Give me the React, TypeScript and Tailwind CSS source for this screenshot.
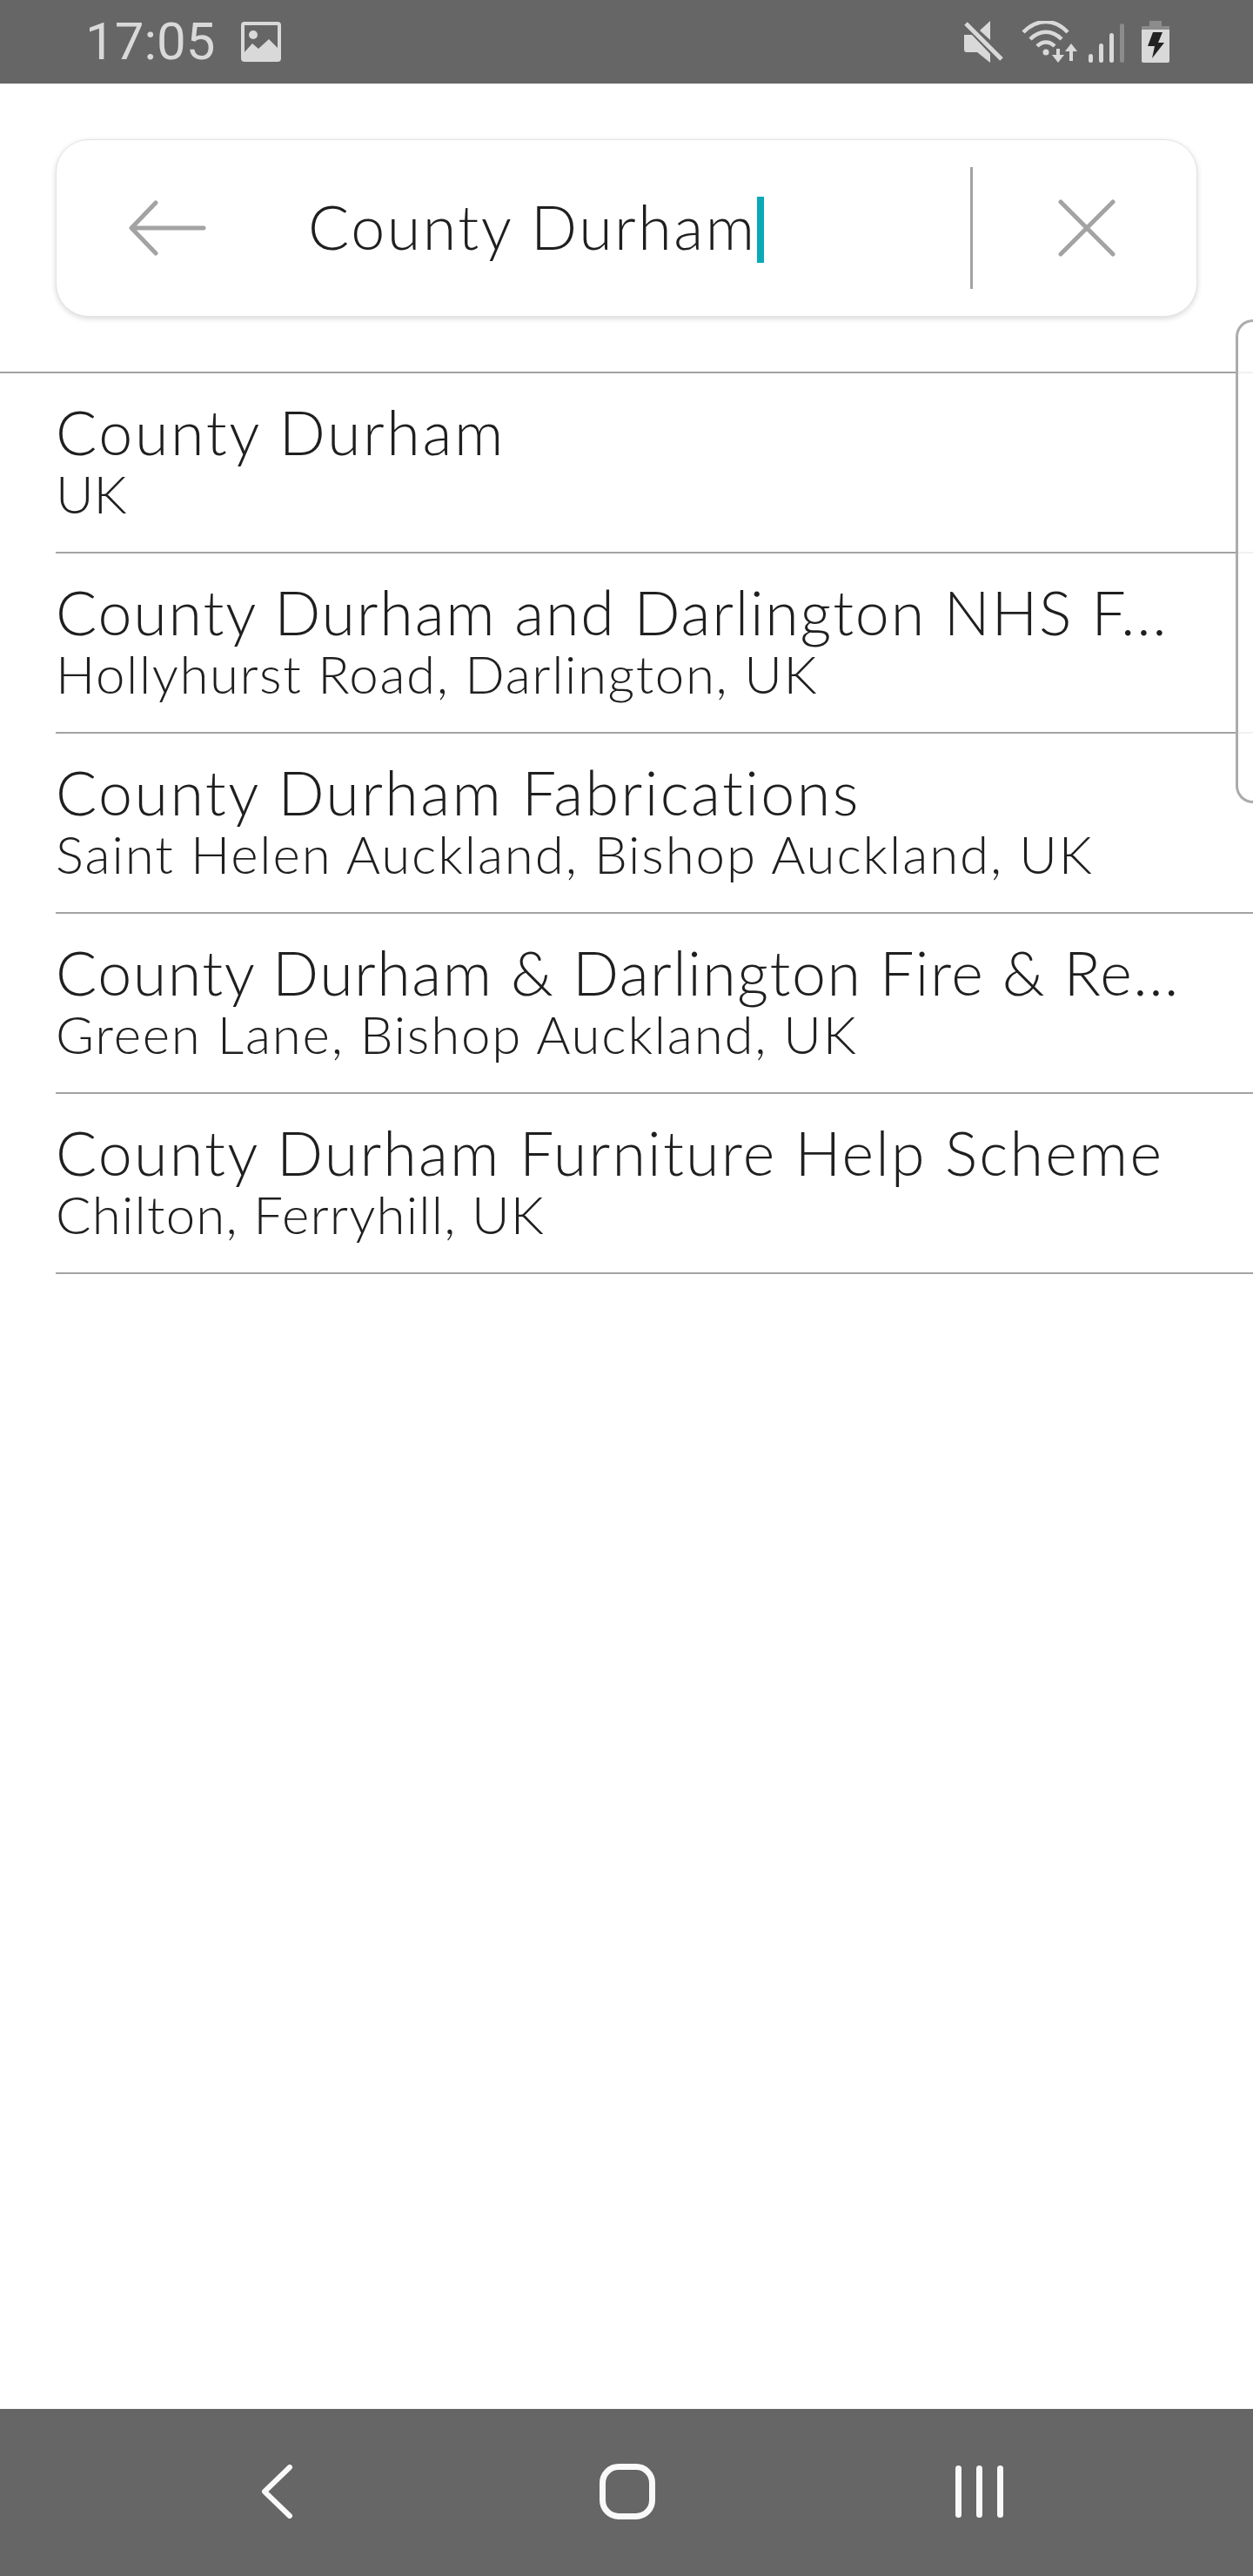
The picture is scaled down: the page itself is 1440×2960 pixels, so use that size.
import React from 'react';

const results = [
  { title: 'County Durham', sub: 'UK', titleCls: 'tracking-[2.6px]', subCls: 'tracking-[0px]' },
  { title: 'County Durham and Darlington NHS F...', sub: 'Hollyhurst Road, Darlington, UK', titleCls: 'tracking-[1.8px]', subCls: 'tracking-[1.6px]' },
  { title: 'County Durham Fabrications', sub: 'Saint Helen Auckland, Bishop Auckland, UK', titleCls: 'tracking-[2.4px]', subCls: 'tracking-[1.9px]' },
  { title: 'County Durham & Darlington Fire & Re...', sub: 'Green Lane, Bishop Auckland, UK', titleCls: 'tracking-[1.5px]', subCls: 'tracking-[1.8px]' },
  { title: 'County Durham Furniture Help Scheme', sub: 'Chilton, Ferryhill, UK', titleCls: 'tracking-[2.2px]', subCls: 'tracking-[1.2px]' },
];

const StatusBar: React.FC = () => (
  <div className="h-24 shrink-0 bg-[#666666] flex items-center justify-between pl-[98px] pr-[96px] text-[#d9d9d9]">
    <div className="flex items-center gap-[30px]">
      <span className="font-[Roboto,sans-serif] text-[60px] leading-none">17:05</span>
      {/* gallery notification */}
      <svg width="46" height="46" viewBox="0 0 46 46" fill="none">
        <rect x="2" y="2" width="42" height="42" rx="2" stroke="#d9d9d9" strokeWidth="4" />
        <circle cx="14" cy="15" r="5" fill="#d9d9d9" />
        <path d="M3 36 L13 25 L20 31 L32 20 L43 31 V44 H3 Z" fill="#d9d9d9" />
      </svg>
    </div>
    <div className="flex items-center h-12">
      {/* mute */}
      <svg width="46" height="48" viewBox="0 0 46 48" fill="none">
        <path d="M0 16 H9 L30 38 V48 L15 36 H3 Q0 36 0 33 Z" fill="#d9d9d9" />
        <path d="M30 0 V22 L18 11 Z" fill="#d9d9d9" />
        <path d="M2 3 L43 44" stroke="#d9d9d9" strokeWidth="5" />
      </svg>
      {/* wifi with data arrows */}
      <svg className="ml-5" width="66" height="48" viewBox="0 0 66 48" fill="none">
        <path d="M2 13 C18 -3 38 -3 53 13" stroke="#d9d9d9" strokeWidth="4.5" />
        <path d="M10 21 C21 10 35 10 46 21" stroke="#d9d9d9" strokeWidth="4.5" />
        <path d="M18 29 C24 23 32 23 38 29" stroke="#d9d9d9" strokeWidth="4.5" />
        <circle cx="28" cy="36" r="3.5" fill="#d9d9d9" />
        <path d="M42 32 V44" stroke="#d9d9d9" strokeWidth="4" />
        <path d="M35 39 H49 L42 48 Z" fill="#d9d9d9" />
        <path d="M57 34 V46" stroke="#d9d9d9" strokeWidth="4" />
        <path d="M50 35 L57 26 L64 35 Z" fill="#d9d9d9" />
      </svg>
      {/* signal */}
      <div className="ml-[11px] flex items-end gap-[7px] h-[45px] self-end">
        <div className="w-[5px] h-[10px] rounded-full bg-[#d9d9d9]" />
        <div className="w-[5px] h-[22px] rounded-full bg-[#d9d9d9]" />
        <div className="w-[5px] h-[34px] rounded-full bg-[#d9d9d9]" />
        <div className="w-[5px] h-[45px] rounded-full bg-[#8c8c8c]" />
      </div>
      {/* battery charging */}
      <svg className="ml-5" width="32" height="48" viewBox="0 0 32 48" fill="none">
        <rect x="9" y="0" width="14" height="7" fill="#8c8c8c" />
        <path d="M1 6 H31 Q32 6 32 7 V10 H0 V7 Q0 6 1 6 Z" fill="#8c8c8c" />
        <path d="M0 10 H32 V46 Q32 48 30 48 H2 Q0 48 0 46 Z" fill="#d9d9d9" />
        <path d="M13 13 H24 L19 25 H26 L12 43 L15 29 H7 Z" fill="#222222" />
      </svg>
    </div>
  </div>
);

const NavBar: React.FC = () => (
  <div className="h-48 shrink-0 bg-[#666666] flex items-center pl-[299px] pb-[2px]">
    <svg width="38" height="62" viewBox="0 0 38 62" fill="none">
      <path d="M34 3 L5 31 L34 59" stroke="#f9f9f9" strokeWidth="6" strokeLinecap="round" strokeLinejoin="round" />
    </svg>
    <div className="ml-[352px] w-16 h-16 rounded-[22px] border-[7px] border-[#f9f9f9]" />
    <div className="ml-[345px] flex gap-[17px]">
      <div className="w-[7px] h-[60px] rounded-full bg-[#f9f9f9]" />
      <div className="w-[7px] h-[60px] rounded-full bg-[#f9f9f9]" />
      <div className="w-[7px] h-[60px] rounded-full bg-[#f9f9f9]" />
    </div>
  </div>
);

const SearchBox: React.FC = () => (
  <div className="shrink-0 h-[333px] pt-16 px-16 border-b-2 border-[#a3a3a3]">
    <div className="h-[204px] rounded-[38px] bg-white border border-[#e4e4e4] shadow-[0_2px_6px_rgba(0,0,0,0.16)] flex items-center">
      <svg className="ml-[83px] shrink-0" width="90" height="64" viewBox="0 0 90 64" fill="none">
        <path d="M86 32 H4 M31 3 L3 32 L31 61" stroke="#a3a3a3" strokeWidth="5" strokeLinecap="round" strokeLinejoin="round" />
      </svg>
      <div className="ml-[116px] flex-1 flex items-center">
        <span className="font-[Lato,sans-serif] font-light text-[70px] leading-none tracking-[2.5px] text-[#1f1f1f] -mt-[4px]">County Durham</span>
        <div className="w-2 h-[76px] bg-[#0aa9b8] mt-[4px]" />
      </div>
      <div className="w-[3px] h-[140px] bg-[#a3a3a3]" />
      <svg className="ml-[98px] mr-[93px] shrink-0" width="66" height="66" viewBox="0 0 66 66" fill="none">
        <path d="M3 3 L63 63 M63 3 L3 63" stroke="#a3a3a3" strokeWidth="5" strokeLinecap="round" />
      </svg>
    </div>
  </div>
);

const ResultRow: React.FC<{ title: string; sub: string; titleCls: string; subCls: string }> = ({ title, sub, titleCls, subCls }) => (
  <div className="ml-16 h-[207px] border-b-2 border-[#a3a3a3] pt-[29px] text-[#1f1f1f] font-[Lato,sans-serif] font-light whitespace-nowrap">
    <div className={`text-[70px] leading-[76px] ${titleCls}`}>{title}</div>
    <div className={`text-[60px] leading-[66px] ${subCls}`}>{sub}</div>
  </div>
);

export default function App() {
  return (
    <div className="relative w-[1440px] h-[2960px] bg-white flex flex-col overflow-hidden">
      <StatusBar />
      <SearchBox />
      <div className="flex-1">
        {results.map((r) => (
          <ResultRow key={r.title} {...r} />
        ))}
      </div>
      <NavBar />
      {/* edge panel handle */}
      <div className="absolute right-0 top-[367px] w-5 h-[556px] rounded-l-[24px] border-[3px] border-r-0 border-[#ababab] bg-white/85" />
    </div>
  );
}
